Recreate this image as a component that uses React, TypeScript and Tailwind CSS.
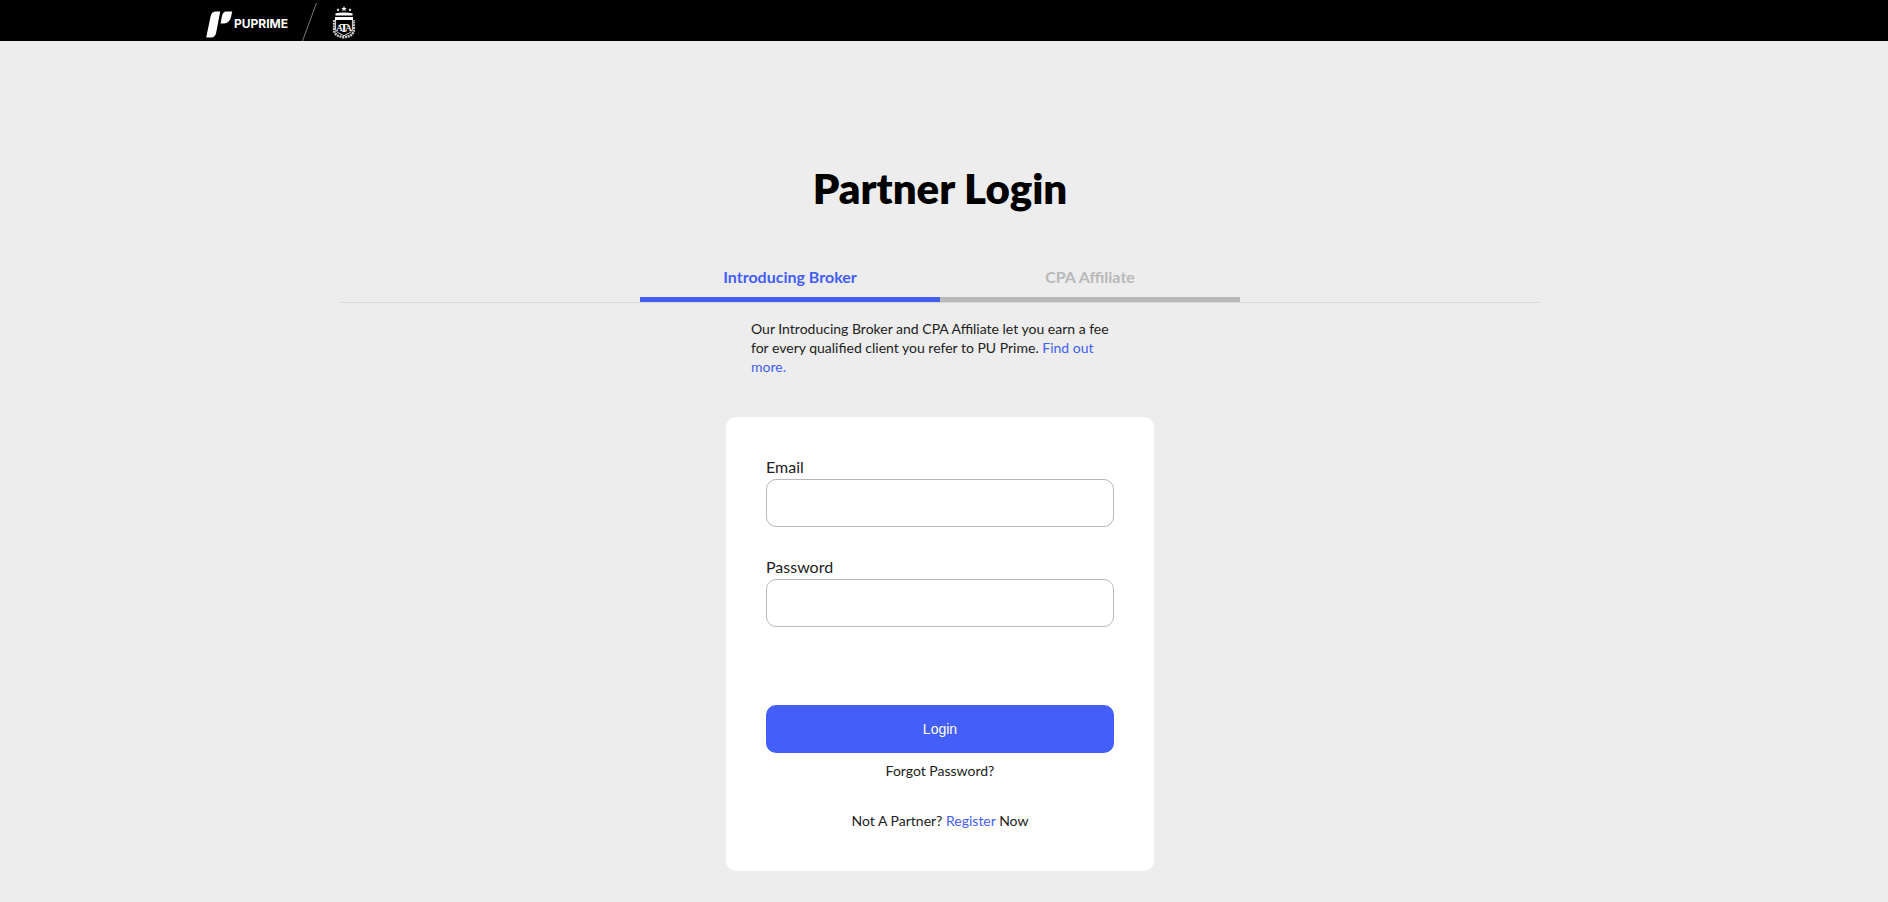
import { useState } from "react";

function PuMark() {
  return (
    <svg viewBox="0 0 27 27" className="h-[27px] w-[27px]" fill="#fff" aria-hidden="true">
      <path d="M9.8 0.4H14.2L10.2 21.6C9.6 24.8 8.2 26.3 5.8 26.4H0.2L4.6 5.2C5.2 2 7 0.5 9.8 0.4Z" />
      <path d="M20.4 0.4H26.2L25.2 5.2C24.2 9.8 21.8 12.3 18 12.4H14.6L15.9 5.2C16.6 2 18 0.5 20.4 0.4Z" />
    </svg>
  );
}

function Crest() {
  return (
    <svg viewBox="0 0 24 33" className="h-[33px] w-6" aria-label="ATA" role="img">
      <g fill="#fff">
        <path d="M12 0L12.8 1.9L14.8 2L13.2 3.3L13.8 5.2L12 4.1L10.2 5.2L10.8 3.3L9.2 2L11.2 1.9Z" />
        <path d="M6 2.2L6.5 3.3L7.6 3.4L6.8 4.2L7 5.3L6 4.8L5 5.3L5.2 4.2L4.4 3.4L5.5 3.3Z" />
        <path d="M18 2.2L18.5 3.3L19.6 3.4L18.8 4.2L19 5.3L18 4.8L17 5.3L17.2 4.2L16.4 3.4L17.5 3.3Z" />
        <path d="M3.5 7.2Q12 6 20.5 7.2V9.6H3.5Z" />
        <path d="M3 11H21V14H3Z" />
      </g>
      <path d="M3.6 14V23C3.9 26.6 8 27.2 12 29.8C16 27.2 20.1 26.6 20.4 23V14" fill="none" stroke="#fff" strokeWidth="0.9" />
      <path d="M2.2 14V24C2.5 28.6 6 30.6 12 31.2C18 30.6 21.5 28.6 21.8 24V14" fill="none" stroke="#ccc" strokeWidth="2.6" strokeDasharray="2 0.7" />
      <g fill="#fff" fontFamily="Liberation Serif, serif" fontWeight="700" textAnchor="middle">
        <text x="7.4" y="24.8" fontSize="9">A</text>
        <text x="16.6" y="24.8" fontSize="9">A</text>
        <text x="12" y="25.8" fontSize="13">T</text>
      </g>
    </svg>
  );
}

function Field({ id, label, type }: { id: string; label: string; type: string }) {
  return (
    <div className="flex flex-col">
      <label htmlFor={id} className="text-base leading-6">{label}</label>
      <input
        id={id}
        type={type}
        className="h-12 w-full rounded-[10px] border border-[#b9b9b9] bg-white px-4 text-base outline-none focus:border-[#435ef9]"
      />
    </div>
  );
}

const tabs = ["Introducing Broker", "CPA Affiliate"];

export default function App() {
  const [active, setActive] = useState(0);
  return (
    <div className="min-h-screen bg-[#ededed] font-[Lato,sans-serif] text-[#212121]">
      <header className="flex h-[41px] items-start overflow-hidden bg-black pl-[206px]">
        <a href="#" className="flex items-start gap-px text-white">
          <span className="pt-[11px]"><PuMark /></span>
          <span className="pt-4 font-[Inter,sans-serif] text-xs leading-4 font-bold">PUPRIME</span>
        </a>
        <svg viewBox="0 0 16 41" className="ml-3.5 h-[41px] w-4" aria-hidden="true">
          <path d="M14.5 3L0.5 41" stroke="#777" strokeWidth="1" />
        </svg>
        <span className="ml-3.5 pt-1.5"><Crest /></span>
      </header>

      <main className="flex flex-col items-center pt-[123px] pr-2 pb-8">
        <h1 className="text-[42px] leading-[48px] font-extrabold text-black">Partner Login</h1>

        <div className="mt-[45px] flex w-full max-w-[1200px] justify-center border-b border-[#d8d8d8]" role="tablist">
          {tabs.map((tab, i) => (
            <button
              key={tab}
              type="button"
              role="tab"
              aria-selected={active === i}
              onClick={() => setActive(i)}
              className={
                active === i
                  ? "w-[300px] cursor-pointer border-b-5 border-[#435ef9] pt-2 pb-2 text-base leading-6 font-bold text-[#435ef9]"
                  : "w-[300px] cursor-pointer border-b-5 border-[#b9b9b9] pt-2 pb-2 text-base leading-6 font-bold text-[#b9b9b9]"
              }
            >
              {tab}
            </button>
          ))}
        </div>

        <p className="mt-4 w-[378px] text-sm leading-[19px]">
          Our Introducing Broker and CPA Affiliate let you earn a fee for every qualified client you refer to PU Prime.{" "}
          <a href="#" className="text-[#435ef9]">Find out more.</a>
        </p>

        <form
          className="mt-[41px] flex w-[428px] flex-col rounded-[10px] bg-white px-10 pt-[38px] pb-10"
          onSubmit={(e) => e.preventDefault()}
        >
          <div className="flex flex-col gap-7">
            <Field id="email" label="Email" type="email" />
            <Field id="password" label="Password" type="password" />
          </div>
          <button
            type="submit"
            className="mt-[78px] h-12 cursor-pointer rounded-[10px] bg-[#435ef9] font-[Liberation_Sans,sans-serif] text-sm text-white"
          >
            Login
          </button>
          <a href="#" className="mt-2 text-center text-sm leading-5">Forgot Password?</a>
          <p className="mt-[30px] text-center text-sm leading-5">
            Not A Partner? <a href="#" className="text-[#435ef9]">Register</a> Now
          </p>
        </form>
      </main>
    </div>
  );
}
